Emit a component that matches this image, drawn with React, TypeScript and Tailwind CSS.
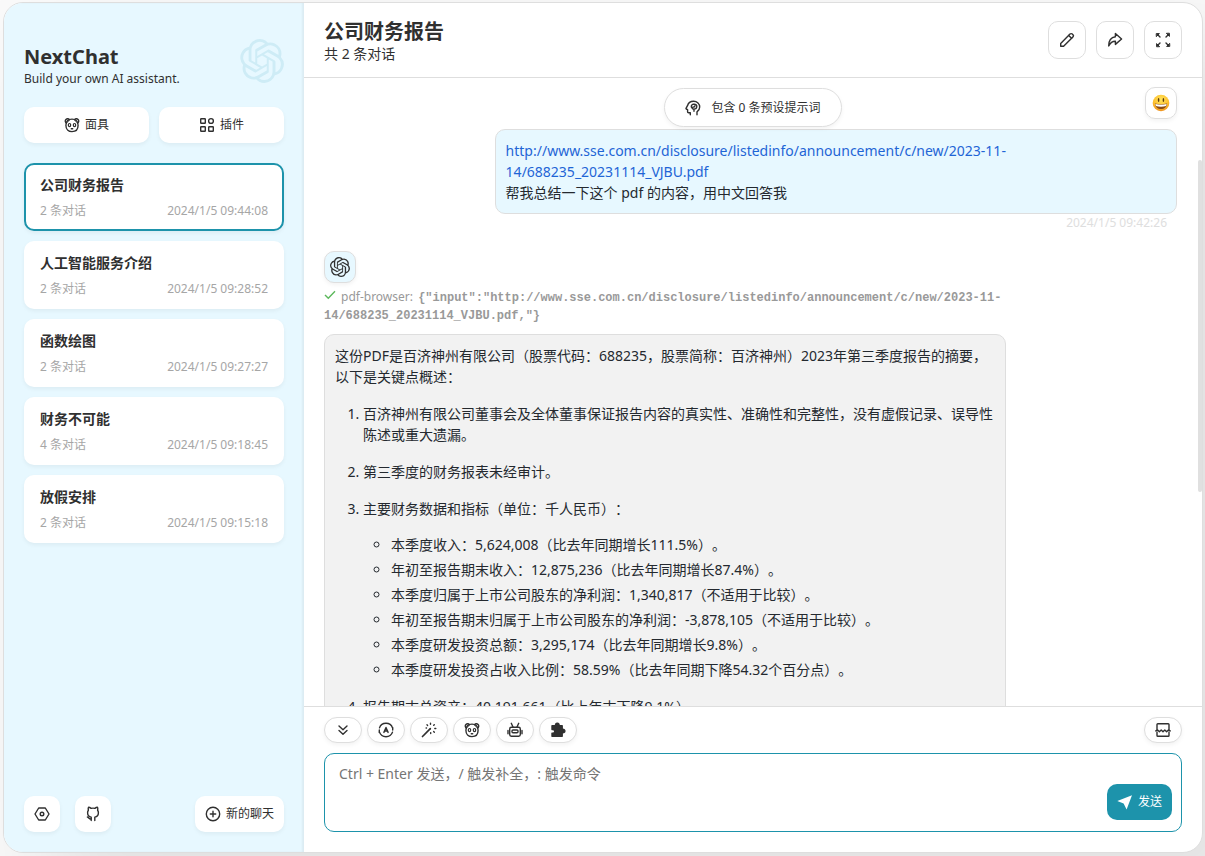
import type { ReactNode } from "react"
import { SiOpenai } from "react-icons/si"

const sessions = [
  { title: "公司财务报告", count: 2, time: "2024/1/5 09:44:08" },
  { title: "人工智能服务介绍", count: 2, time: "2024/1/5 09:28:52" },
  { title: "函数绘图", count: 2, time: "2024/1/5 09:27:27" },
  { title: "财务不可能", count: 4, time: "2024/1/5 09:18:45" },
  { title: "放假安排", count: 2, time: "2024/1/5 09:15:18" },
]

const metrics = [
  "本季度收入：5,624,008（比去年同期增长111.5%）。",
  "年初至报告期末收入：12,875,236（比去年同期增长87.4%）。",
  "本季度归属于上市公司股东的净利润：1,340,817（不适用于比较）。",
  "年初至报告期末归属于上市公司股东的净利润：-3,878,105（不适用于比较）。",
  "本季度研发投资总额：3,295,174（比去年同期增长9.8%）。",
  "本季度研发投资占收入比例：58.59%（比去年同期下降54.32个百分点）。",
]

function Icon({ children }: { children: ReactNode }) {
  return (
    <svg
      viewBox="0 0 16 16"
      className="size-4 shrink-0"
      fill="none"
      stroke="currentColor"
      strokeWidth="1.4"
      strokeLinecap="round"
      strokeLinejoin="round"
      aria-hidden="true"
    >
      {children}
    </svg>
  )
}

const MaskIcon = () => (
  <Icon>
    <path d="M2.400 6.200C1.100 5.200.9 3.500 1.900 2.500s2.700-.9 3.500.2M13.600 6.200c1.300-1 1.500-2.700.5-3.700s-2.700-.9-3.500.2" />
    <path d="M8 2.100c3.800 0 6.100 2.200 6.100 6.200 0 3.900-2.500 6.300-6.100 6.300S1.900 12.200 1.900 8.300c0-4 2.300-6.200 6.100-6.200z" />
    <path d="M3 5.400C4 5 4.800 4.200 5.200 3M13 5.400c-1-.4-1.800-1.200-2.200-2.400" strokeWidth="1" />
    <ellipse cx="5.500" cy="8.100" rx="1.200" ry="1.600" strokeWidth="1.200" />
    <ellipse cx="10.500" cy="8.100" rx="1.200" ry="1.600" strokeWidth="1.200" />
    <path d="M7.300 11.700h1.400" />
  </Icon>
)

const PluginIcon = () => (
  <Icon>
    <rect x="1.700" y="1.700" width="4.600" height="4.600" rx=".5" />
    <circle cx="12" cy="4" r="2.400" />
    <rect x="1.700" y="9.700" width="4.600" height="4.600" rx=".5" />
    <rect x="9.700" y="9.700" width="4.600" height="4.600" rx=".5" />
  </Icon>
)

const SettingsIcon = () => (
  <Icon>
    <path d="M4.700 2h6.600L15 8l-3.700 6H4.700L1 8z" />
    <circle cx="8" cy="8" r="1.800" />
  </Icon>
)

const GithubIcon = () => (
  <Icon>
    <path d="M6.200 14.600v-3.500c-2-.3-3.600-1.700-3.600-4.300 0-1.100.3-2 .8-2.600-.3-.9-.3-1.900.1-2.900 1 0 1.900.5 2.600 1.100 1.200-.3 2.600-.3 3.800 0 .7-.6 1.600-1.100 2.600-1.100.4 1 .4 2 .1 2.900.5.6.8 1.500.8 2.600 0 2.600-1.600 4-3.600 4.300v3.500" />
    <path d="M6.200 12.900c-2.200.5-2.400-1.700-3.800-1.900" />
  </Icon>
)

const AddIcon = () => (
  <Icon>
    <circle cx="8" cy="8" r="6.700" />
    <path d="M8 5.300v5.400M5.300 8h5.400" />
  </Icon>
)

const EditIcon = () => (
  <Icon>
    <path d="M1.700 11.400 11 2.100c.7-.7 1.600-.7 2.300 0l.6.600c.7.7.7 1.600 0 2.300l-9.300 9.300H1.700z" />
    <path d="m9.700 3.400 2.900 2.900" />
  </Icon>
)

const ShareIcon = () => (
  <Icon>
    <path d="M8.400 1.500 14.600 7l-6.200 5.400V9.300C5.500 9.200 3.500 10.600 1.700 14 1.700 8.700 4 5.400 8.400 4.800z" />
  </Icon>
)

const MaxIcon = () => (
  <Icon>
    <path
      fill="currentColor"
      strokeWidth="1"
      d="M1.600 1.600h2.800L1.600 4.400zM14.400 1.600v2.800l-2.800-2.800zM14.400 14.400h-2.800l2.800-2.800zM1.600 14.400v-2.800l2.800 2.800z"
    />
    <path d="m3 3 2 2M13 3l-2 2M13 13l-2-2M3 13l2-2" />
  </Icon>
)

const BrainIcon = () => (
  <Icon>
    <path d="M5.300 14.700v-1.900H3.600c-.6 0-1-.4-1-1V9.700L1.200 9c-.3-.2-.3-.4-.2-.7l1.500-2.600C3.200 3 5.600 1.300 8.600 1.300c3.500 0 6.100 2.500 6.100 5.700 0 2.100-1 3.700-2.700 4.900v2.800" />
    <path d="M9 11.300V9.200M6.300 6.400c0-1.500 1.300-2.400 2.500-2.100 1.500-.4 3.100.6 3 2.200-.1 1.500-1.500 2.600-2.800 2.600-.8.1-1.700-.3-1.600-1.100-.7-.200-1.100-.8-1.100-1.600zM8 7c1 .3 1.800-.2 1.900-1.200" />
  </Icon>
)

const BottomIcon = () => (
  <Icon>
    <path d="m4 4 4 3.700L12 4M4 8.500l4 3.700 4-3.700" />
  </Icon>
)

const AutoIcon = () => (
  <Icon>
    <path d="M1.500 5.900C2.400 3.200 5 1.300 8 1.300s5.600 1.900 6.500 4.600M14.500 10.100c-.9 2.700-3.500 4.600-6.500 4.600s-5.600-1.900-6.500-4.600" />
    <path d="M1.300 8v2.400M14.700 8V5.600" />
    <path d="M5.900 10.400 8 5.500l2.100 4.900M6.700 9h2.600" />
  </Icon>
)

const PromptIcon = () => (
  <Icon>
    <path d="m1.500 14.500 7.800-7.800" strokeWidth="1.700" />
    <path d="M9.500 1.300v1M6 2.800l.6.600M13.300 2.700l-.6.600M14.800 6.500h-1M13.300 10.200l-.6-.6M9.700 11.600v-1M5.500 6h-.4" />
  </Icon>
)

const RobotIcon = () => (
  <Icon>
    <rect x="2.700" y="5.300" width="10.600" height="8.900" rx="1.600" />
    <path d="M4.300 1.300 6 5M11.700 1.300 10 5M1 8.500v3.300M15 8.500v3.300" />
    <rect x="5" y="8" width="6" height="2.800" rx="1" />
  </Icon>
)

const PuzzleIcon = () => (
  <Icon>
    <path
      fill="currentColor"
      d="M2 3.700h3.600c-.4-1.500.4-2.600 1.700-2.600S9.400 2.200 9 3.700h3.200v3.600c1.500-.4 2.700.4 2.700 1.700s-1.200 2.100-2.700 1.700v3.600H2v-3.200c1.800.3 2.700-.6 2.700-1.800S3.800 7.200 2 7.500z"
    />
  </Icon>
)

const BreakIcon = () => (
  <Icon>
    <path d="M2 7.500v-5c0-.5.3-.8.8-.8h10.400c.5 0 .8.300.8.800v5M2 10v3.500c0 .5.300.8.8.8h10.400c.5 0 .8-.3.8-.8V10" />
    <path d="M.8 8.900 2.600 8l1.800 1.700 1.800-1.700L8 9.700 9.800 8l1.800 1.700L13.400 8l1.800.9" />
  </Icon>
)

const SendIcon = () => (
  <Icon>
    <path d="M15 1.300.3 6.900l6.300 2.500 3 6.200z" fill="currentColor" stroke="none" />
  </Icon>
)

function Smiley() {
  return (
    <svg viewBox="0 0 18 18" className="size-[18px]" role="img" aria-label="smiley">
      <defs>
        <radialGradient id="face" cx=".5" cy=".3" r=".7">
          <stop offset="0" stopColor="#ffe45c" />
          <stop offset=".65" stopColor="#fdc02f" />
          <stop offset="1" stopColor="#ee8f1b" />
        </radialGradient>
      </defs>
      <circle cx="9" cy="9" r="8.300" fill="url(#face)" />
      <ellipse cx="6.600" cy="6" rx=".8" ry="1.900" fill="#5c3a12" />
      <ellipse cx="11.400" cy="6" rx=".8" ry="1.900" fill="#5c3a12" />
      <path d="M2.900 9.600c3.800 1.100 8.400 1.100 12.200 0-.2 3.500-2.800 5.500-6.100 5.500s-5.900-2-6.100-5.500z" fill="#8a4b14" />
      <path d="M3.300 10c3.700 1 7.700 1 11.400 0l-.6 2c-3.300.9-6.900.9-10.200 0z" fill="#fff" />
    </svg>
  )
}

function SideButton({ icon, text, className }: { icon: ReactNode; text?: string; className: string }) {
  return (
    <button
      className={`flex h-9 items-center justify-center gap-[5px] rounded-[10px] bg-white text-xs shadow-[0_2px_4px_rgba(0,0,0,0.05)] ${className}`}
    >
      {icon}
      {text}
    </button>
  )
}

function WindowButton({ label, children }: { label: string; children: ReactNode }) {
  return (
    <button
      aria-label={label}
      className="flex size-[38px] items-center justify-center rounded-[10px] border border-[#dedede] bg-white"
    >
      {children}
    </button>
  )
}

function ActionButton({ label, children }: { label: string; children: ReactNode }) {
  return (
    <button
      aria-label={label}
      className="flex h-[26px] w-[38px] items-center justify-center rounded-full border border-[#dedede] bg-white shadow-[0_2px_4px_rgba(0,0,0,0.05)]"
    >
      {children}
    </button>
  )
}

function Sidebar() {
  return (
    <aside className="flex w-[300px] shrink-0 flex-col bg-[#e7f8ff] p-5 shadow-[inset_-2px_0_2px_rgba(0,0,0,0.05)]">
      <div className="flex items-start justify-between pt-4">
        <div className="pt-1">
          <h1 className="text-xl leading-7 font-bold">NextChat</h1>
          <p className="text-xs leading-4">Build your own AI assistant.</p>
        </div>
        <SiOpenai className="size-11 text-[#ceecf6]" />
      </div>

      <div className="mt-5 flex gap-2.5">
        <SideButton className="flex-1" text="面具" icon={<MaskIcon />} />
        <SideButton className="flex-1" text="插件" icon={<PluginIcon />} />
      </div>

      <ul className="mt-5 flex flex-1 flex-col gap-2.5">
        {sessions.map((s, i) => (
          <li
            key={s.title}
            className={`rounded-[10px] border-2 bg-white px-3.5 py-[9px] shadow-[0_2px_4px_rgba(0,0,0,0.05)] ${
              i === 0 ? "border-[#1d93ab]" : "border-transparent"
            }`}
          >
            <div className="text-sm leading-[21px] font-bold">{s.title}</div>
            <div className="mt-[7px] flex justify-between text-xs leading-[18px] text-[#a6a6a6]">
              <span>{s.count} 条对话</span>
              <span>{s.time}</span>
            </div>
          </li>
        ))}
      </ul>

      <div className="flex items-center gap-[15px]">
        <button aria-label="设置" className="flex size-9 items-center justify-center rounded-[10px] bg-white shadow-[0_2px_4px_rgba(0,0,0,0.05)]">
          <SettingsIcon />
        </button>
        <button aria-label="GitHub" className="flex size-9 items-center justify-center rounded-[10px] bg-white shadow-[0_2px_4px_rgba(0,0,0,0.05)]">
          <GithubIcon />
        </button>
        <SideButton className="ml-auto px-2.5" text="新的聊天" icon={<AddIcon />} />
      </div>
    </aside>
  )
}

function Messages() {
  return (
    <div className="relative min-h-0 flex-1 overflow-hidden pt-[9px] pr-[25px] pl-5">
      <div className="absolute inset-x-0 top-[10px] flex justify-center">
        <button className="flex h-[39px] items-center gap-2.5 rounded-full border border-[#dedede] bg-white px-5 text-xs shadow-[0_2px_4px_rgba(0,0,0,0.05)]">
          <BrainIcon />
          包含 0 条预设提示词
        </button>
      </div>
      <div className="absolute top-[82px] right-0 h-[332px] w-1 rounded-full bg-[#e0e0e0]" />

      <div className="flex flex-col items-end">
        <div className="flex size-8 items-center justify-center rounded-[10px] border border-[#dedede] shadow-[0_2px_4px_rgba(0,0,0,0.05)]">
          <Smiley />
        </div>
        <div className="mt-2.5 w-4/5 rounded-[10px] border border-[#dedede] bg-[#e7f8ff] p-2.5 text-sm leading-[21px] text-[#24292f]">
          <a href="#pdf" className="text-[#1f65d6]">
            http://www.sse.com.cn/disclosure/listedinfo/announcement/c/new/2023-11-14/688235_20231114_VJBU.pdf
          </a>
          <p>帮我总结一下这个 pdf 的内容，用中文回答我</p>
        </div>
        <time className="pr-2.5 text-xs leading-[18px] text-[#dedede]">2024/1/5 09:42:26</time>
      </div>

      <div className="mt-[19px] w-4/5">
        <div className="flex size-8 items-center justify-center rounded-[10px] border border-[#dedede] bg-[#e7f8ff] shadow-[0_2px_4px_rgba(0,0,0,0.05)]">
          <SiOpenai className="size-5" />
        </div>
        <div className="mt-[5px] text-xs leading-[18px] text-[#999]">
          <svg viewBox="0 0 12 12" className="mr-[5px] inline size-3 align-baseline" fill="none" stroke="#5cb85c" strokeWidth="1.4">
            <path d="m1 6 3.300 3.300L11 2.300" />
          </svg>
          pdf-browser:{" "}
          <code className="ml-0.5 font-['Liberation_Mono',monospace] leading-none font-bold">
            {'{"input":"http://www.sse.com.cn/disclosure/listedinfo/announcement/c/new/2023-11-14/688235_20231114_VJBU.pdf,"}'}
          </code>
        </div>

        <div className="mt-2.5 rounded-[10px] border border-[#dedede] bg-[#f2f2f2] p-2.5 text-sm leading-[21px] text-[#24292f] [text-spacing-trim:space-all]">
          <p>这份PDF是百济神州有限公司（股票代码：688235，股票简称：百济神州）2023年第三季度报告的摘要，以下是关键点概述：</p>
          <ol className="mt-4 flex list-decimal flex-col gap-4 pl-7">
            <li>百济神州有限公司董事会及全体董事保证报告内容的真实性、准确性和完整性，没有虚假记录、误导性陈述或重大遗漏。</li>
            <li>第三季度的财务报表未经审计。</li>
            <li>
              主要财务数据和指标（单位：千人民币）：
              <ul className="mt-[15px] flex list-[circle] flex-col gap-1 pl-7">
                {metrics.map((m) => (
                  <li key={m}>{m}</li>
                ))}
              </ul>
            </li>
            <li>报告期末总资产：40,191,661（比上年末下降9.1%）。</li>
          </ol>
        </div>
      </div>
    </div>
  )
}

function InputPanel() {
  return (
    <div className="border-t border-[#dedede] px-5 pt-2.5 pb-5">
      <div className="flex gap-[5px]">
        <ActionButton label="滚到最新"><BottomIcon /></ActionButton>
        <ActionButton label="自动主题"><AutoIcon /></ActionButton>
        <ActionButton label="快捷指令"><PromptIcon /></ActionButton>
        <ActionButton label="所有面具"><MaskIcon /></ActionButton>
        <ActionButton label="模型"><RobotIcon /></ActionButton>
        <ActionButton label="插件"><PuzzleIcon /></ActionButton>
        <div className="ml-auto">
          <ActionButton label="清除聊天"><BreakIcon /></ActionButton>
        </div>
      </div>
      <div className="relative mt-2.5">
        <textarea
          aria-label="消息"
          className="block h-[79px] w-full resize-none rounded-[10px] border border-[#1d93ab] bg-white px-3.5 py-[9px] text-sm leading-[21px] placeholder:text-[#757575] focus:outline-none"
          placeholder="Ctrl + Enter 发送，/ 触发补全，: 触发命令"
        />
        <button className="absolute right-2.5 bottom-3 flex h-9 items-center gap-[5px] rounded-[10px] bg-[#1d93ab] px-2.5 text-xs text-white">
          <SendIcon />
          发送
        </button>
      </div>
    </div>
  )
}

export default function App() {
  return (
    <div className="h-screen overflow-hidden bg-[#fafafa] pt-[2px] pr-[2px] pb-[3px] pl-[3px] font-['Noto_Sans','Noto_Sans_CJK_SC',sans-serif] text-[#303030]">
      <div className="flex h-full overflow-hidden rounded-[20px] border border-[#dedede] bg-white shadow-[50px_50px_100px_10px_rgba(0,0,0,0.1)]">
        <Sidebar />
        <main className="flex min-w-0 flex-1 flex-col">
          <header className="flex items-center justify-between border-b border-[#dedede] px-5 pt-4 pb-3">
            <div>
              <h2 className="text-xl leading-[26px] font-bold">公司财务报告</h2>
              <p className="pb-0.5 text-sm leading-[18px]">共 2 条对话</p>
            </div>
            <div className="flex gap-2.5 pb-1">
              <WindowButton label="编辑"><EditIcon /></WindowButton>
              <WindowButton label="分享"><ShareIcon /></WindowButton>
              <WindowButton label="全屏"><MaxIcon /></WindowButton>
            </div>
          </header>
          <Messages />
          <InputPanel />
        </main>
      </div>
    </div>
  )
}
